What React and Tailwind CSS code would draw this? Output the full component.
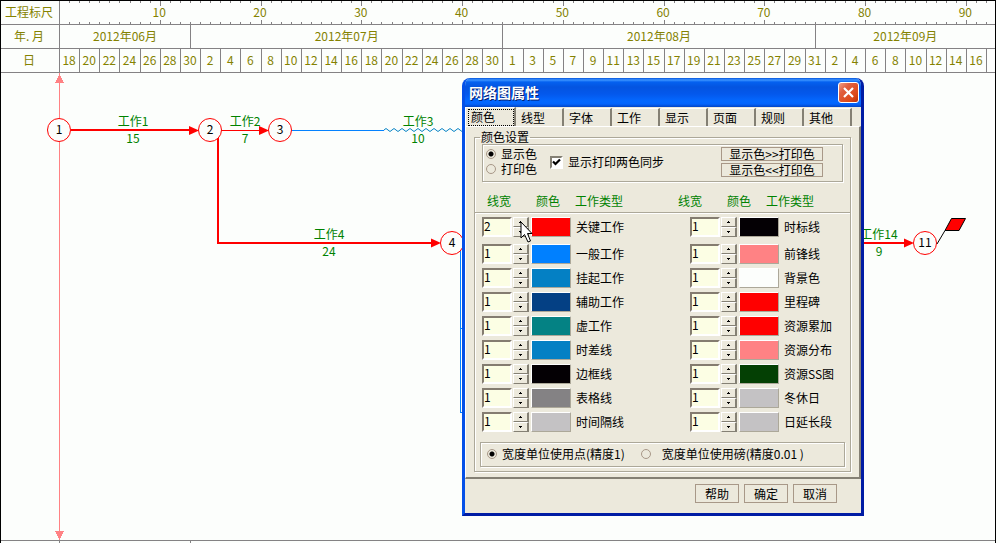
import React from "react";

const JULY = [2, 4, 6, 8, 10, 12, 14, 16, 18, 20, 22, 24, 26, 28, 30];
const DAYS = [
  18, 20, 22, 24, 26, 28, 30,
  ...JULY,
  1, 3, 5, 7, 9, 11, 13, 15, 17, 19, 21, 23, 25, 27, 29, 31,
  2, 4, 6, 8, 10, 12, 14, 16,
];

const LEFT_ROWS = [
  ["关键工作", "bg-[#ff0000]", "2"],
  ["一般工作", "bg-[#0080ff]", "1"],
  ["挂起工作", "bg-[#0480c4]", "1"],
  ["辅助工作", "bg-[#044084]", "1"],
  ["虚工作", "bg-[#048284]", "1"],
  ["时差线", "bg-[#0480c4]", "1"],
  ["边框线", "bg-[#040004]", "1"],
  ["表格线", "bg-[#848284]", "1"],
  ["时间隔线", "bg-[#c4c2c4]", "1"],
];

const RIGHT_ROWS = [
  ["时标线", "bg-[#040004]", "1"],
  ["前锋线", "bg-[#ff8284]", "1"],
  ["背景色", "bg-[#fcfefc]", "1"],
  ["里程碑", "bg-[#ff0000]", "1"],
  ["资源累加", "bg-[#ff0000]", "1"],
  ["资源分布", "bg-[#ff8284]", "1"],
  ["资源SS图", "bg-[#044004]", "1"],
  ["冬休日", "bg-[#c4c2c4]", "1"],
  ["日延长段", "bg-[#c4c2c4]", "1"],
];

const TABS = ["线型", "字体", "工作", "显示", "页面", "规则", "其他"];

const timeGrid = "grid grid-cols-[repeat(92,minmax(0,1fr))_8px]";

function HeadLabel({ children }) {
  return (
    <div className="flex w-[59px] shrink-0 items-center justify-center border-r border-[#848284] pr-0.5 pb-0.5">
      {children}
    </div>
  );
}

function Ruler() {
  return (
    <header className="text-[#848200]">
      <div className="flex h-6 border-b border-[#848284]">
        <HeadLabel>工程标尺</HeadLabel>
        <div className={timeGrid + " flex-1"}>
          {Array.from({ length: 92 }, (_, i) => {
            const n = i + 1;
            const major = n % 10 === 0;
            const mark = major ? "h-[5px] w-px bg-[#848284]" : "h-0.5 w-px bg-[#848284]";
            return (
              <div key={n} className="flex h-[23px] flex-col items-end justify-between">
                <i className={mark} />
                {major && (
                  <span className="flex w-[3px] justify-center pb-0.5 leading-3 whitespace-nowrap">
                    <span>{n}</span>
                  </span>
                )}
                <i className={mark} />
              </div>
            );
          })}
        </div>
      </div>
      <div className="flex h-6 border-b border-[#848284]">
        <HeadLabel>年. 月</HeadLabel>
        <div className={timeGrid + " flex-1 items-stretch text-center leading-[21px]"}>
          <div className="col-span-13 border-r border-[#848284]">2012年06月</div>
          <div className="col-span-31 border-r border-[#848284]">2012年07月</div>
          <div className="col-span-31 border-r border-[#848284]">2012年08月</div>
          <div className="col-span-18">2012年09月</div>
        </div>
      </div>
      <div className="flex h-6 border-b border-[#848284]">
        <HeadLabel>日</HeadLabel>
        <div className={timeGrid + " flex-1 text-center leading-[21px]"}>
          {DAYS.map((d, i) => (
            <div key={i} className="col-span-2 flex justify-center border-r border-[#848284] pr-px">
              {d}
            </div>
          ))}
        </div>
      </div>
    </header>
  );
}

function Node({ x, y, n }) {
  return (
    <g>
      <circle cx={x} cy={y} r="11.5" fill="#fcfefc" stroke="#ff0000" />
      <text x={x} y={y + 4} textAnchor="middle" fill="#000">{n}</text>
    </g>
  );
}

function Task({ x, y, name, days }) {
  return (
    <g fill="#008200" textAnchor="middle">
      <text x={x} y={y - 4}>{name}</text>
      <text x={x} y={y + 13}>{days}</text>
    </g>
  );
}

function Head({ x, y }) {
  return <path d={`M${x} ${y}l-10 -4.5v9z`} fill="#ff0000" />;
}

function Network() {
  let wave = "M384 130";
  for (let i = 0; i < 10; i++) wave += "q2 -3 4 0t4 0";
  return (
    <svg className="absolute inset-0 h-full w-full text-[12px]" aria-label="网络图">
      <g transform="translate(-1 -73)">
        <g shapeRendering="crispEdges" fill="none">
          <path d="M59.5 73V540" stroke="#ff8284" />
          <path d="M59.5 74l4.5 9h-9zM55 531h9l-4.5 9z" fill="#ff8284" />
          <path d="M71 130H190M218 137V243H432M864 243H905" stroke="#ff0000" strokeWidth="2" />
          <path d="M221 130.5H260" stroke="#ff0000" />
          <path d="M291 130.5H384M470 328.5H460.5M460.5 250V412.5H470" stroke="#0482ff" />
        </g>
        <path d={wave} stroke="#0482c4" fill="none" />
        <Head x={199} y={130.5} />
        <Head x={269} y={130.5} />
        <Head x={441} y={243} />
        <Head x={914} y={243} />
        <Node x={59} y={130} n="1" />
        <Node x={210} y={130} n="2" />
        <Node x={280} y={130} n="3" />
        <Node x={452} y={243} n="4" />
        <Node x={925} y={243} n="11" />
        <Task x={133} y={130} name="工作1" days="15" />
        <Task x={245} y={130} name="工作2" days="7" />
        <Task x={418} y={130} name="工作3" days="10" />
        <Task x={329} y={243} name="工作4" days="24" />
        <Task x={879} y={243} name="工作14" days="9" />
        <path d="M945 230.500L951.500 218.500H965.500L959 230.500Z" fill="#ff0000" stroke="#000" />
        <path d="M937 244L945 230.500" stroke="#000" />
      </g>
    </svg>
  );
}

const etched = "border border-[#aca899] shadow-[1px_1px_0_#fff,inset_1px_1px_0_#fff]";

function Radio({ name, label, checked, gap = "gap-[5px]" }) {
  return (
    <label className={"flex items-center whitespace-nowrap " + gap}>
      <input
        type="radio"
        name={name}
        defaultChecked={checked}
        className="h-[10px] w-[10px] shrink-0 appearance-none rounded-full border border-[#a89888] bg-[#ece9dc] checked:bg-[radial-gradient(circle,#000_0_2px,transparent_3px)]"
      />
      {label}
    </label>
  );
}

function SpinButton({ label, up }) {
  return (
    <button
      aria-label={label}
      className="flex h-[10px] w-4 items-center justify-center border-t border-r-2 border-b border-l border-t-white border-r-[#848074] border-b-[#848074] border-l-white bg-[#ece9dc]"
    >
      <svg width="3" height="2" shapeRendering="crispEdges">
        <path d={up ? "M1 0h1v1h1v1h-3v-1h1z" : "M0 0h3v1h-1v1h-1v-1h-1z"} fill="#000" />
      </svg>
    </button>
  );
}

function LineRow({ item }) {
  const [name, color, width] = item;
  return (
    <div className="flex h-5 items-center">
      <input
        aria-label={name + "线宽"}
        defaultValue={width}
        className="h-5 w-[30px] border-2 border-t-[#847c70] border-r-white border-b-white border-l-[#847c70] bg-[#fcfee4] pb-1 leading-3 outline-none"
      />
      <div className="ml-px flex flex-col">
        <SpinButton label={name + "加"} up />
        <SpinButton label={name + "减"} />
      </div>
      <button
        aria-label={name + "颜色"}
        className={"ml-0.5 h-5 w-10 border border-t-white border-r-[#aca899] border-b-[#aca899] border-l-white " + color}
      />
      <span className="ml-[5px] leading-5 whitespace-nowrap">{name}</span>
    </div>
  );
}

function LineList({ rows }) {
  return (
    <div className="flex w-[208px] shrink-0 flex-col gap-1 last:w-auto">
      <div className="pb-[3px]">
        <LineRow item={rows[0]} />
      </div>
      {rows.slice(1).map((r) => (
        <LineRow key={r[0]} item={r} />
      ))}
    </div>
  );
}

function ColumnTitles() {
  return (
    <div className="flex w-[191px] shrink-0 text-[#008200] last:w-auto">
      <span className="w-[49px]">线宽</span>
      <span className="w-[39px]">颜色</span>
      <span>工作类型</span>
    </div>
  );
}

const flatButton = "border border-[#a89888] bg-[#ece9dc] text-center";

function Dialog() {
  return (
    <section
      role="dialog"
      aria-label="网络图属性"
      className="absolute top-[78px] left-[462px] w-[402px] overflow-hidden rounded-t-lg border-x-[3px] border-b-[3px] border-l-[#0450e8] border-r-[#001ca4] border-b-[#001ca4] bg-[#ece9dc]"
    >
      <div className="flex h-[29px] items-center justify-between bg-[linear-gradient(#0453dc_0,#3c94ff_2px,#0461f0_4px,#0454e0_9px,#0458ec_16px,#0468ff_23px,#0464fc_26px,#0444c4_29px)] pr-0.5 pl-1">
        <h1 className="pb-0.5 text-[14px] leading-5 font-bold text-white [text-shadow:1px_1px_0_#042070]">
          网络图属性
        </h1>
        <button
          aria-label="关闭"
          className="flex h-[21px] w-[21px] items-center justify-center rounded-[3px] border border-white bg-[linear-gradient(135deg,#f0a088_0,#e06040_30%,#dc4818_75%,#b83008_100%)]"
        >
          <svg width="13" height="13">
            <path d="M2 2L11 11M11 2L2 11" stroke="#fff" strokeWidth="2.200" />
          </svg>
        </button>
      </div>

      <nav role="tablist" className="flex h-[19px] items-end">
        <button
          role="tab"
          aria-selected="true"
          className="flex h-[19px] w-[51px] shrink-0 items-center border-t border-r-2 border-l border-t-white border-r-[#848074] border-l-white pt-px pl-0.5"
        >
          <span className="h-[17px] w-[46px] border border-dotted border-black pl-0.5 text-left leading-[13px]">
            颜色
          </span>
        </button>
        {TABS.map((t) => (
          <button
            role="tab"
            key={t}
            className="h-[18px] w-12 shrink-0 rounded-tl-[3px] border-t border-r-2 border-t-white border-r-[#848074] pl-[5px] text-left leading-[17px]"
          >
            {t}
          </button>
        ))}
      </nav>

      <div className="border-t border-r-2 border-b-2 border-l border-t-white border-r-[#848074] border-b-[#848074] border-l-white pt-[3px] pr-2 pb-[5px] pl-2">
        <fieldset className={"min-w-0 pb-1 " + etched}>
          <legend className="ml-[5px] h-3.5 px-px leading-3.5">颜色设置</legend>

          <div className={"mr-[7px] ml-[7px] flex h-[38px] items-center pb-0.5 " + etched}>
            <div className="flex flex-col pb-0.5 pl-[3px] leading-[15px]">
              <Radio name="target" label="显示色" checked />
              <Radio name="target" label="打印色" />
            </div>
            <label className="ml-[13px] flex items-center gap-[5px] whitespace-nowrap">
              <input
                type="checkbox"
                defaultChecked
                className="h-[13px] w-[13px] appearance-none border-2 border-t-[#848074] border-r-white border-b-white border-l-[#848074] bg-white"
              />
              <svg className="pointer-events-none -ml-4 h-[9px] w-[9px]" viewBox="0 0 9 9">
                <path d="M1 3.500L3.500 6L8 1.500" stroke="#000" strokeWidth="2.200" fill="none" />
              </svg>
              <span className="pl-0.5">显示打印两色同步</span>
            </label>
            <div className="mr-[19px] ml-auto flex w-[102px] flex-col gap-0.5">
              <button className={flatButton + " h-3.5 leading-3"}>显示色&gt;&gt;打印色</button>
              <button className={flatButton + " h-3.5 leading-3"}>显示色&lt;&lt;打印色</button>
            </div>
          </div>

          <div className="flex h-[31px] items-center border-b border-[#aca899] pt-2 pl-3 shadow-[0_1px_0_#fff]">
            <ColumnTitles />
            <ColumnTitles />
          </div>

          <div className="flex pt-1 pl-[7px]">
            <LineList rows={LEFT_ROWS} />
            <LineList rows={RIGHT_ROWS} />
          </div>

          <div className={"mx-[5px] mt-[10px] flex h-[25px] items-center pb-px pl-1.5 " + etched}>
            <Radio name="unit" label="宽度单位使用点(精度1)" checked />
            <div className="ml-4">
              <Radio name="unit" label="宽度单位使用磅(精度0.01 )" gap="gap-[11px]" />
            </div>
          </div>
        </fieldset>
      </div>

      <footer className="flex justify-end gap-[5px] pt-[5px] pr-6 pb-[10px]">
        {["帮助", "确定", "取消"].map((t) => (
          <button key={t} className={flatButton + " h-[19px] w-11 leading-[17px]"}>
            {t}
          </button>
        ))}
      </footer>
    </section>
  );
}

function Pointer() {
  return (
    <svg className="pointer-events-none absolute top-[221px] left-[520px]" width="14" height="23" aria-hidden="true">
      <path d="M1 1V17L4.500 13.500L8 21L10.500 20L7.500 12.500H12Z" fill="#fff" stroke="#000" />
    </svg>
  );
}

export default function App() {
  return (
    <div className="relative min-h-screen bg-[#fcfefc] pr-1 font-['Noto_Sans_CJK_SC',sans-serif] text-[12px] leading-4 text-black">
      <main className="flex min-h-screen flex-col border-t border-r border-l border-black">
        <Ruler />
        <div className="relative flex-1">
          <Network />
        </div>
        <div className="flex h-[3px] border-t border-[#848284]">
          <i className="w-[59px] shrink-0 border-r border-[#848284]" />
          <div className={timeGrid + " flex-1"}>
            <i className="col-span-13 border-r border-[#848284]" />
          </div>
        </div>
      </main>
      <Dialog />
      <Pointer />
    </div>
  );
}
